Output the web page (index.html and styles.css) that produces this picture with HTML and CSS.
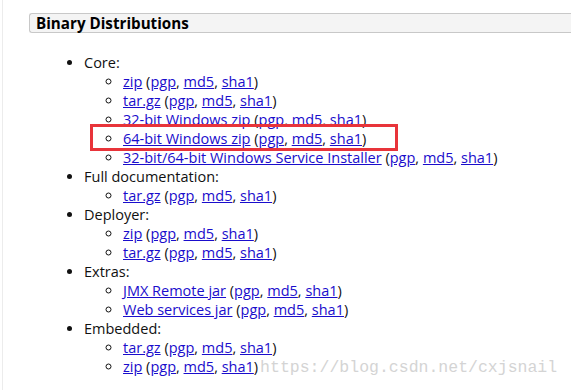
FILE: index.html
```html
<!DOCTYPE html>
<html>
<head>
<meta charset="utf-8">
<link rel="stylesheet" href="styles.css">
</head>
<body>
<div class="page">
  <h3 class="section-title">Binary Distributions</h3>
  <ul class="dist">
    <li>Core:
      <ul class="files">
        <li><a href="#">zip</a> (<a href="#">pgp</a>, <a href="#">md5</a>, <a href="#">sha1</a>)</li>
        <li><a href="#">tar.gz</a> (<a href="#">pgp</a>, <a href="#">md5</a>, <a href="#">sha1</a>)</li>
        <li><a href="#">32-bit Windows zip</a> (<a href="#">pgp</a>, <a href="#">md5</a>, <a href="#">sha1</a>)</li>
        <li class="marked"><a href="#">64-bit Windows zip</a> (<a href="#">pgp</a>, <a href="#">md5</a>, <a href="#">sha1</a>)</li>
        <li><a href="#">32-bit/64-bit Windows Service Installer</a> (<a href="#">pgp</a>, <a href="#">md5</a>, <a href="#">sha1</a>)</li>
      </ul>
    </li>
    <li>Full documentation:
      <ul class="files">
        <li><a href="#">tar.gz</a> (<a href="#">pgp</a>, <a href="#">md5</a>, <a href="#">sha1</a>)</li>
      </ul>
    </li>
    <li>Deployer:
      <ul class="files">
        <li><a href="#">zip</a> (<a href="#">pgp</a>, <a href="#">md5</a>, <a href="#">sha1</a>)</li>
        <li><a href="#">tar.gz</a> (<a href="#">pgp</a>, <a href="#">md5</a>, <a href="#">sha1</a>)</li>
      </ul>
    </li>
    <li>Extras:
      <ul class="files">
        <li><a href="#">JMX Remote jar</a> (<a href="#">pgp</a>, <a href="#">md5</a>, <a href="#">sha1</a>)</li>
        <li><a href="#">Web services jar</a> (<a href="#">pgp</a>, <a href="#">md5</a>, <a href="#">sha1</a>)</li>
      </ul>
    </li>
    <li>Embedded:
      <ul class="files">
        <li><a href="#">tar.gz</a> (<a href="#">pgp</a>, <a href="#">md5</a>, <a href="#">sha1</a>)</li>
        <li><a href="#">zip</a> (<a href="#">pgp</a>, <a href="#">md5</a>, <a href="#">sha1</a>)<span class="watermark">https://blog.csdn.net/cxjsnail</span></li>
      </ul>
    </li>
  </ul>
</div>
</body>
</html>
```
FILE: styles.css
```css
html, body {
  margin: 0;
  padding: 0;
  background: #ffffff;
}
body {
  font-family: "Open Sans", "Noto Sans", sans-serif;
  font-size: 14.5px;
  color: #111;
}
.page {
  margin-left: 2px;
  border-left: 1px solid #ececec;
  height: 390px;
  padding-top: 13px;
  box-sizing: border-box;
  overflow: hidden;
}
.section-title {
  margin: 0 0 0 26px;
  height: 18px;
  line-height: 18px;
  padding: 0 0 0 6px;
  font-size: 15.2px;
  font-weight: bold;
  color: #000;
  background: #f4f4f4;
  border: 1px solid #c8c8c8;
  border-right: none;
  border-radius: 3px 0 0 3px;
}
.dist {
  margin: 20px 0 0 0;
  padding-left: 81px;
  list-style: disc;
  line-height: 19px;
}
.files {
  margin: 0;
  padding-left: 39px;
  list-style: circle;
}
a {
  color: #1a0dcc;
  text-decoration: underline;
}
.marked {
  position: relative;
}
.marked::after {
  content: "";
  position: absolute;
  left: -33px;
  top: -5px;
  width: 302px;
  height: 21px;
  border: 3px solid #e8343a;
}
.watermark {
  font-family: "Liberation Mono", "DejaVu Sans Mono", monospace;
  font-size: 16.5px;
  color: #d4d4d4;
  margin-left: 2px;
}
```
